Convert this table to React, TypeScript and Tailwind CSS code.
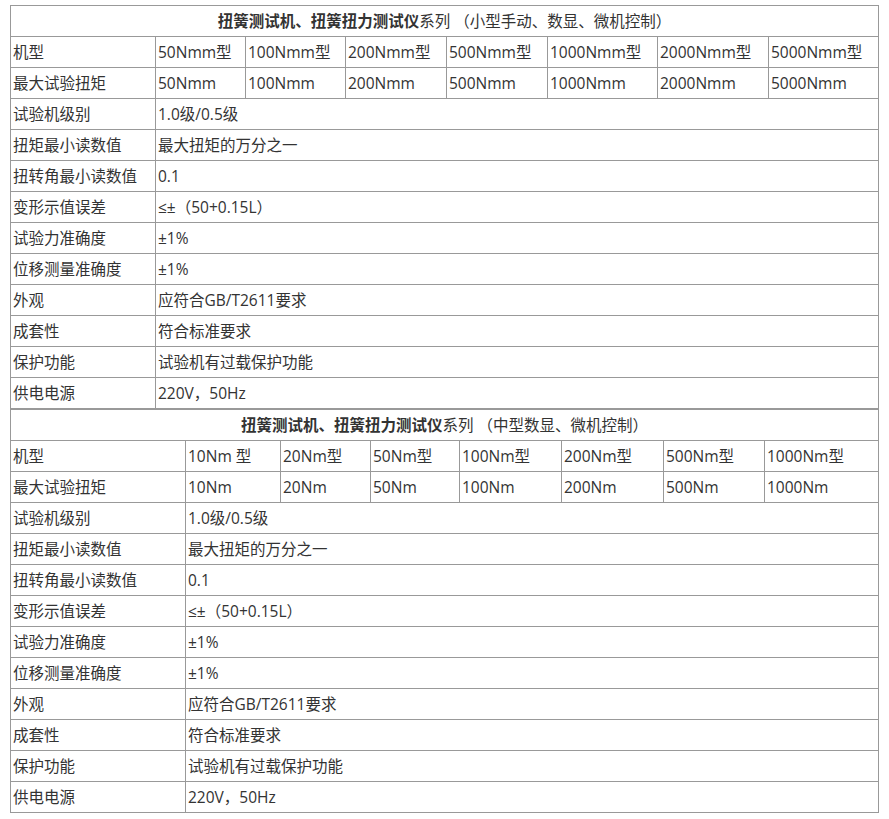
const font = { fontFamily: '"Open Sans", "DejaVu Sans", "Noto Sans CJK SC", sans-serif' };

type Spec = {
  cols: number[];
  bold: string;
  rest: string;
  models: string[];
  torques: string[];
};

const specRows: [string, string][] = [
  ["试验机级别", "1.0级/0.5级"],
  ["扭矩最小读数值", "最大扭矩的万分之一"],
  ["扭转角最小读数值", "0.1"],
  ["变形示值误差", "≤±（50+0.15L）"],
  ["试验力准确度", "±1%"],
  ["位移测量准确度", "±1%"],
  ["外观", "应符合GB/T2611要求"],
  ["成套性", "符合标准要求"],
  ["保护功能", "试验机有过载保护功能"],
  ["供电电源", "220V，50Hz"],
];

const small: Spec = {
  cols: [145, 90, 100, 101, 101, 110, 111, 110],
  bold: "扭簧测试机、扭簧扭力测试仪",
  rest: "系列 （小型手动、数显、微机控制）",
  models: ["50Nmm型", "100Nmm型", "200Nmm型", "500Nmm型", "1000Nmm型", "2000Nmm型", "5000Nmm型"],
  torques: ["50Nmm", "100Nmm", "200Nmm", "500Nmm", "1000Nmm", "2000Nmm", "5000Nmm"],
};

const medium: Spec = {
  cols: [175, 95, 90, 89, 102, 102, 101, 114],
  bold: "扭簧测试机、扭簧扭力测试仪",
  rest: "系列 （中型数显、微机控制）",
  models: ["10Nm 型", "20Nm型", "50Nm型", "100Nm型", "200Nm型", "500Nm型", "1000Nm型"],
  torques: ["10Nm", "20Nm", "50Nm", "100Nm", "200Nm", "500Nm", "1000Nm"],
};

const cell = "border border-[#999] h-[31px] px-[2px] py-0 align-middle whitespace-nowrap overflow-hidden leading-[20px]";

function SpecTable({ spec }: { spec: Spec }) {
  return (
    <table className="table-fixed border-collapse w-[868px] border border-[#888] text-[15.5px] text-[#333]">
      <colgroup>
        {spec.cols.map((w, i) => (
          <col key={i} style={{ width: w }} />
        ))}
      </colgroup>
      <tbody>
        <tr>
          <td className={cell + " text-center"} colSpan={8}>
            <strong className="font-bold">{spec.bold}</strong>
            {spec.rest}
          </td>
        </tr>
        <tr>
          <td className={cell}>机型</td>
          {spec.models.map((m) => (
            <td key={m} className={cell}>{m}</td>
          ))}
        </tr>
        <tr>
          <td className={cell}>最大试验扭矩</td>
          {spec.torques.map((t) => (
            <td key={t} className={cell}>{t}</td>
          ))}
        </tr>
        {specRows.map(([label, value]) => (
          <tr key={label}>
            <td className={cell}>{label}</td>
            <td className={cell} colSpan={7}>{value}</td>
          </tr>
        ))}
      </tbody>
    </table>
  );
}

export default function App() {
  return (
    <div className="min-h-[819px] w-[889px] bg-white pt-[5px] pl-[10px]" style={font}>
      <SpecTable spec={small} />
      <SpecTable spec={medium} />
    </div>
  );
}
